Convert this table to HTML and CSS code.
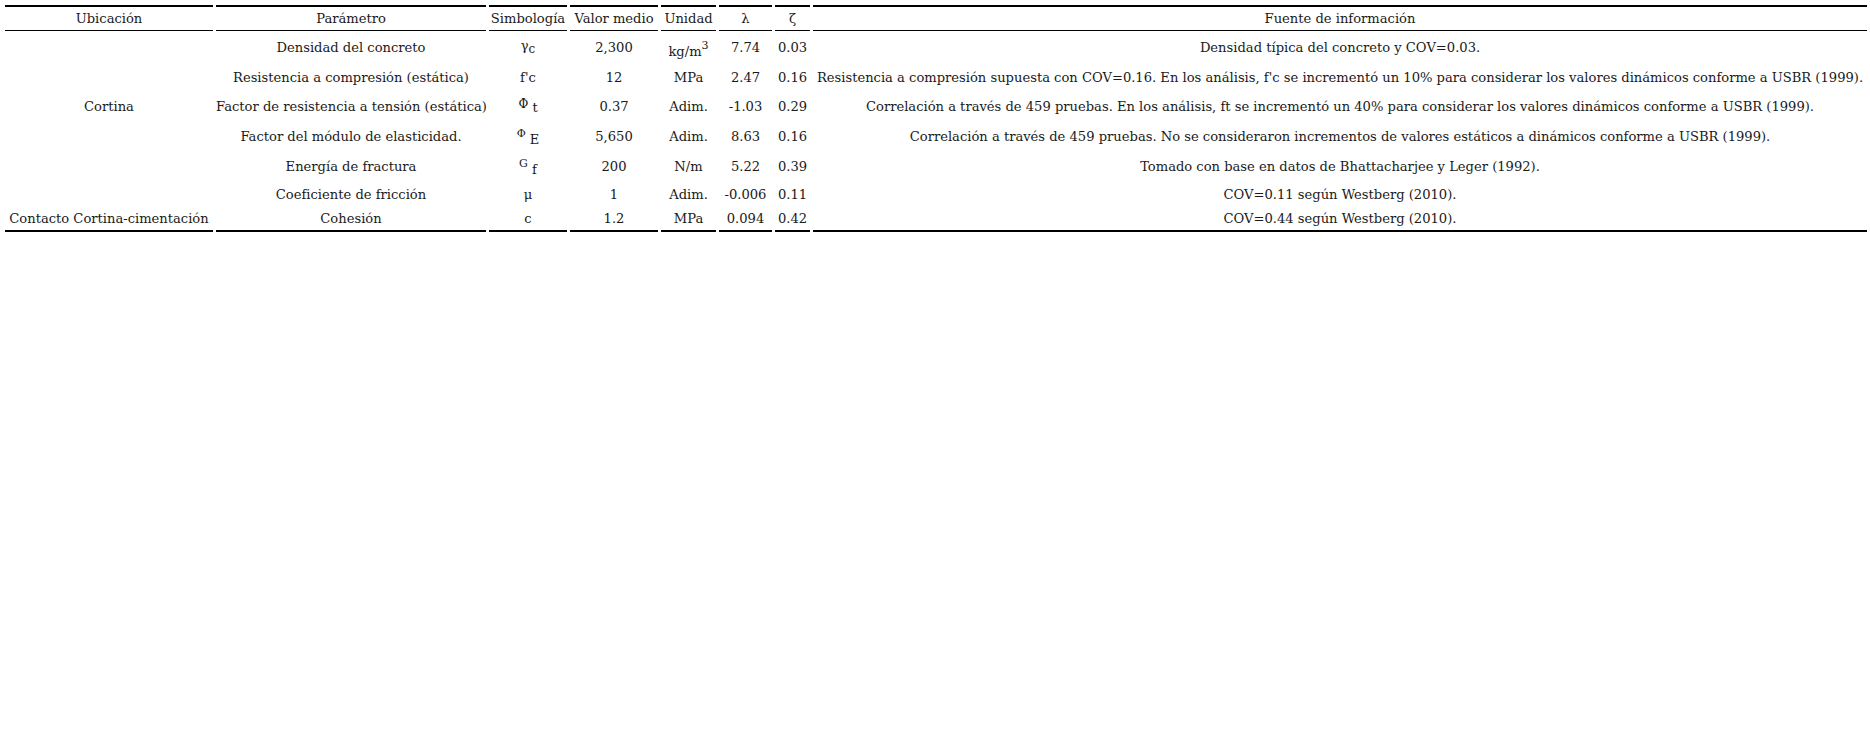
FILE: index.html
```html
<!DOCTYPE html>
<html lang="es">
<head>
<meta charset="utf-8">
<title>Tabla de parámetros</title>
<link rel="stylesheet" href="styles.css">
</head>
<body>
<table class="tbl">
  <colgroup>
    <col class="c1"><col class="c2"><col class="c3"><col class="c4"><col class="c5"><col class="c6"><col class="c7"><col class="c8">
  </colgroup>
  <thead>
    <tr class="rh">
      <th>Ubicación</th><th>Parámetro</th><th>Simbología</th><th>Valor medio</th><th>Unidad</th><th>λ</th><th>ζ</th><th>Fuente de información</th>
    </tr>
  </thead>
  <tbody>
    <tr class="r1">
      <td></td><td>Densidad del concreto</td><td>γ<sub class="sub1">c</sub></td><td>2,300</td><td class="unit">kg/m<sup class="sup">3</sup></td><td>7.74</td><td>0.03</td><td>Densidad típica del concreto y COV=0.03.</td>
    </tr>
    <tr class="r2">
      <td></td><td>Resistencia a compresión (estática)</td><td>f'c</td><td>12</td><td>MPa</td><td>2.47</td><td>0.16</td><td>Resistencia a compresión supuesta con COV=0.16. En los análisis, f'c se incrementó un 10% para considerar los valores dinámicos conforme a USBR (1999).</td>
    </tr>
    <tr class="r3">
      <td>Cortina</td><td>Factor de resistencia a tensión (estática)</td><td><span class="phi3">Φ</span> <sub class="sub3">t</sub></td><td>0.37</td><td>Adim.</td><td>-1.03</td><td>0.29</td><td>Correlación a través de 459 pruebas. En los análisis, ft se incrementó un 40% para considerar los valores dinámicos conforme a USBR (1999).</td>
    </tr>
    <tr class="r4">
      <td></td><td>Factor del módulo de elasticidad.</td><td><span class="phi">Φ</span> <sub class="sub4">E</sub></td><td>5,650</td><td>Adim.</td><td>8.63</td><td>0.16</td><td>Correlación a través de 459 pruebas. No se consideraron incrementos de valores estáticos a dinámicos conforme a USBR (1999).</td>
    </tr>
    <tr class="r5">
      <td></td><td>Energía de fractura</td><td><span class="phi">G</span> <sub class="sub4">f</sub></td><td>200</td><td>N/m</td><td>5.22</td><td>0.39</td><td>Tomado con base en datos de Bhattacharjee y Leger (1992).</td>
    </tr>
    <tr class="r6">
      <td></td><td>Coeficiente de fricción</td><td>μ</td><td>1</td><td>Adim.</td><td>-0.006</td><td>0.11</td><td>COV=0.11 según Westberg (2010).</td>
    </tr>
    <tr class="r7">
      <td>Contacto Cortina-cimentación</td><td>Cohesión</td><td>c</td><td>1.2</td><td>MPa</td><td>0.094</td><td>0.42</td><td>COV=0.44 según Westberg (2010).</td>
    </tr>
  </tbody>
</table>
</body>
</html>
```
FILE: styles.css
```css
html, body {
  margin: 0;
  padding: 0;
  background: #ffffff;
}

body {
  font-family: "DejaVu Serif", "Liberation Serif", serif;
  font-size: 13.1px;
  color: #1a1a1a;
}

.tbl {
  margin: 5px 0 0 2px;
  border-collapse: separate;
  border-spacing: 3px 0;
  table-layout: fixed;
  width: 1866px;
}

.c1 { width: 208px; }
.c2 { width: 270px; }
.c3 { width: 78px; }
.c4 { width: 88px; }
.c5 { width: 55px; }
.c6 { width: 53px; }
.c7 { width: 35px; }
.c8 { width: 1054px; }

.tbl th,
.tbl td {
  padding: 0;
  text-align: center;
  vertical-align: middle;
  white-space: nowrap;
  font-weight: normal;
}

.tbl th {
  border-top: 2px solid #000;
  border-bottom: 1px solid #000;
  height: 23px;
}

.r1 td { height: 32px; }
.r2 td { height: 28px; }
.r3 td { height: 30px; }
.r4 td { height: 31px; }
.r5 td { height: 29px; }
.r6 td { height: 26px; }
.r7 td { height: 23px; border-bottom: 2px solid #000; }

.sub1 {
  font-size: 12px;
  vertical-align: -3px;
}

.sup {
  font-size: 11px;
  vertical-align: 7px;
}

.unit {
  position: relative;
  top: 2px;
}

.phi3 {
  font-size: 12px;
  vertical-align: 1px;
}

.sub3 {
  font-size: 13px;
  vertical-align: -3px;
}

.phi {
  font-size: 11px;
  vertical-align: 5px;
}

.sub4 {
  font-size: 13px;
  vertical-align: -2px;
}
```
